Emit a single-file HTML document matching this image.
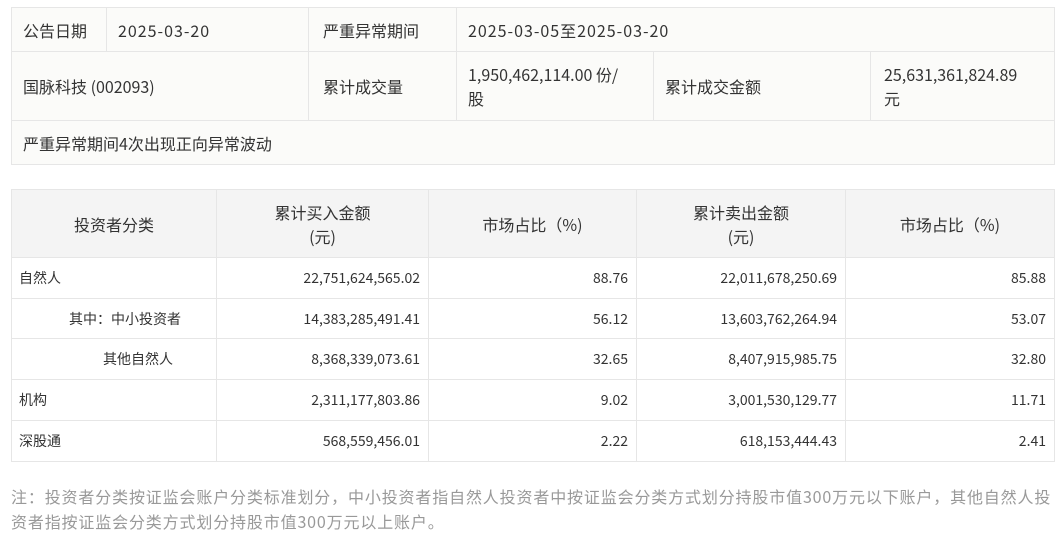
<!DOCTYPE html>
<html><head><meta charset="utf-8"><style>
*{margin:0;padding:0;box-sizing:border-box}
body{width:1059px;height:546px;background:#fff;font-family:"Noto Sans CJK SC","Liberation Sans",sans-serif;color:#333;position:relative;overflow:hidden}
.c{position:absolute;border:1px solid #e6e6e6;display:flex;align-items:center;padding-left:11px;font-size:16px;line-height:24px}
.t1{background:#fbfbf9}
.n{letter-spacing:1px}
.h{background:#f4f4f4;justify-content:center;text-align:center;padding:0;font-size:16px}
.b{background:#fff;font-size:14px;padding-left:7px}
.r{justify-content:flex-end;padding-right:8px;padding-left:0}
.note{position:absolute;left:11px;top:484px;font-size:16px;line-height:25px;color:#999;white-space:nowrap;letter-spacing:0.85px}
</style></head><body>
<div class="c t1" style="left:11px;top:7px;width:96px;height:45px">公告日期</div>
<div class="c t1 n" style="left:106px;top:7px;width:203px;height:45px">2025-03-20</div>
<div class="c t1" style="left:308px;top:7px;width:149px;height:45px;padding-left:14px">严重异常期间</div>
<div class="c t1 n" style="left:456px;top:7px;width:599px;height:45px">2025-03-05至2025-03-20</div>
<div class="c t1" style="left:11px;top:51px;width:298px;height:70px">国脉科技 (002093)</div>
<div class="c t1" style="left:308px;top:51px;width:149px;height:70px;padding-left:14px">累计成交量</div>
<div class="c t1" style="left:456px;top:51px;width:198px;height:70px">1,950,462,114.00 份/<br>股</div>
<div class="c t1" style="left:653px;top:51px;width:218px;height:70px">累计成交金额</div>
<div class="c t1" style="left:870px;top:51px;width:185px;height:70px;padding-left:13px">25,631,361,824.89<br>元</div>
<div class="c t1" style="left:11px;top:120px;width:1044px;height:45px">严重异常期间4次出现正向异常波动</div>

<div class="c h" style="left:11px;top:189px;width:206px;height:69px">投资者分类</div>
<div class="c h" style="left:216px;top:189px;width:213px;height:69px">累计买入金额<br>(元)</div>
<div class="c h" style="left:428px;top:189px;width:209px;height:69px">市场占比（%)</div>
<div class="c h" style="left:636px;top:189px;width:210px;height:69px">累计卖出金额<br>(元)</div>
<div class="c h" style="left:845px;top:189px;width:210px;height:69px">市场占比（%)</div>

<div class="c b" style="left:11px;top:257px;width:206px;height:42px">自然人</div>
<div class="c b r" style="left:216px;top:257px;width:213px;height:42px">22,751,624,565.02</div>
<div class="c b r" style="left:428px;top:257px;width:209px;height:42px">88.76</div>
<div class="c b r" style="left:636px;top:257px;width:210px;height:42px">22,011,678,250.69</div>
<div class="c b r" style="left:845px;top:257px;width:210px;height:42px">85.88</div>

<div class="c b" style="left:11px;top:298px;width:206px;height:41px;padding-left:57px">其中：中小投资者</div>
<div class="c b r" style="left:216px;top:298px;width:213px;height:41px">14,383,285,491.41</div>
<div class="c b r" style="left:428px;top:298px;width:209px;height:41px">56.12</div>
<div class="c b r" style="left:636px;top:298px;width:210px;height:41px">13,603,762,264.94</div>
<div class="c b r" style="left:845px;top:298px;width:210px;height:41px">53.07</div>

<div class="c b" style="left:11px;top:338px;width:206px;height:42px;padding-left:91px">其他自然人</div>
<div class="c b r" style="left:216px;top:338px;width:213px;height:42px">8,368,339,073.61</div>
<div class="c b r" style="left:428px;top:338px;width:209px;height:42px">32.65</div>
<div class="c b r" style="left:636px;top:338px;width:210px;height:42px">8,407,915,985.75</div>
<div class="c b r" style="left:845px;top:338px;width:210px;height:42px">32.80</div>

<div class="c b" style="left:11px;top:379px;width:206px;height:42px">机构</div>
<div class="c b r" style="left:216px;top:379px;width:213px;height:42px">2,311,177,803.86</div>
<div class="c b r" style="left:428px;top:379px;width:209px;height:42px">9.02</div>
<div class="c b r" style="left:636px;top:379px;width:210px;height:42px">3,001,530,129.77</div>
<div class="c b r" style="left:845px;top:379px;width:210px;height:42px">11.71</div>

<div class="c b" style="left:11px;top:420px;width:206px;height:42px">深股通</div>
<div class="c b r" style="left:216px;top:420px;width:213px;height:42px">568,559,456.01</div>
<div class="c b r" style="left:428px;top:420px;width:209px;height:42px">2.22</div>
<div class="c b r" style="left:636px;top:420px;width:210px;height:42px">618,153,444.43</div>
<div class="c b r" style="left:845px;top:420px;width:210px;height:42px">2.41</div>

<div class="note">注：投资者分类按证监会账户分类标准划分，中小投资者指自然人投资者中按证监会分类方式划分持股市值300万元以下账户，其他自然人投<br>资者指按证监会分类方式划分持股市值300万元以上账户。</div>
</body></html>
